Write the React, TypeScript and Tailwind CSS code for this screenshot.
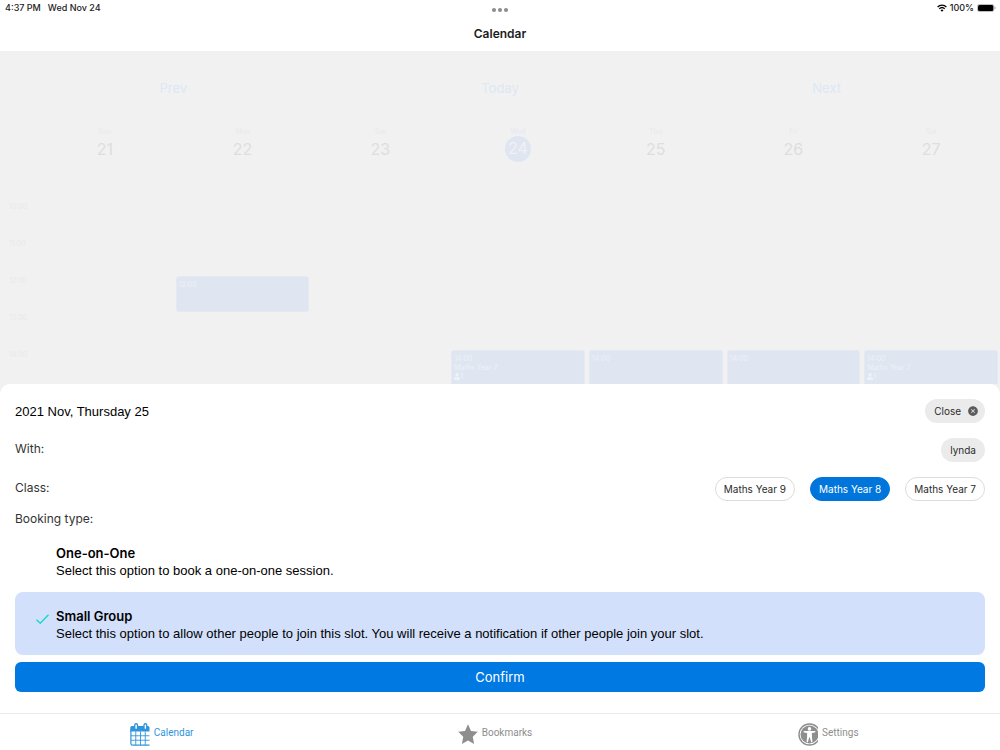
import { useState } from 'react';
import { IoCloseCircle } from 'react-icons/io5';

interface Booking {
  day: number;
  hour: number;
  title?: string;
  people?: number;
}

const days = [
  { name: 'Sun', date: 21 },
  { name: 'Mon', date: 22 },
  { name: 'Tue', date: 23 },
  { name: 'Wed', date: 24 },
  { name: 'Thu', date: 25 },
  { name: 'Fri', date: 26 },
  { name: 'Sat', date: 27 },
];

const today = 24;
const hours = [10, 11, 12, 13, 14];

const bookings: Booking[] = [
  { day: 22, hour: 12 },
  { day: 24, hour: 14, title: 'Maths Year 7', people: 1 },
  { day: 25, hour: 14 },
  { day: 26, hour: 14 },
  { day: 27, hour: 14, title: 'Maths Year 7', people: 1 },
];

const classes = ['Maths Year 9', 'Maths Year 8', 'Maths Year 7'];

const bookingTypes = [
  {
    id: 'single',
    title: 'One-on-One',
    text: 'Select this option to book a one-on-one session.',
  },
  {
    id: 'group',
    title: 'Small Group',
    text: 'Select this option to allow other people to join this slot. You will receive a notification if other people join your slot.',
  },
];

function WifiIcon() {
  return (
    <svg viewBox="0 0 20 15" className="h-2 w-[10px]" fill="none" stroke="#000" strokeWidth="2.6">
      <path d="M1.2 5.4a12.6 12.6 0 0 1 17.6 0" />
      <path d="M4.6 9a7.8 7.8 0 0 1 10.8 0" />
      <path d="M10 15 7 11.8a4.3 4.3 0 0 1 6 0Z" fill="#000" stroke="none" />
    </svg>
  );
}

function BatteryIcon() {
  return (
    <svg viewBox="0 0 38 16" className="h-2 w-[19px]">
      <rect x="0.8" y="0.8" width="33" height="14.4" rx="4.4" fill="#fff" stroke="#9d9d9d" strokeWidth="1.5" />
      <rect x="2" y="2" width="30.6" height="12" rx="3" fill="#000" />
      <path d="M35.4 5.4c1.4.5 2 1.5 2 2.6s-.6 2.1-2 2.6Z" fill="#9d9d9d" />
    </svg>
  );
}

function PersonIcon() {
  return (
    <svg viewBox="0 0 12 14" className="h-[7px] w-[6px]" fill="currentColor">
      <path d="M6 0a3.4 3.4 0 0 1 3.4 3.6C9.4 5.8 7.9 7.4 6 7.4S2.6 5.8 2.6 3.6A3.4 3.4 0 0 1 6 0ZM0 13v-2.4C0 8.8 1.6 7.8 3.2 7.6c1.7 1.4 3.9 1.4 5.6 0 1.6.2 3.2 1.2 3.2 3V13c0 .6-.4 1-1 1H1c-.6 0-1-.4-1-1Z" />
    </svg>
  );
}

function CalendarIcon() {
  return (
    <svg viewBox="0 0 40 46" className="h-[23px] w-5" fill="none">
      <path d="M39 44.3H5a3.2 3.2 0 0 1-3.2-3.2V13" stroke="currentColor" strokeWidth="2.4" />
      <path d="M.6 17V9a3 3 0 0 1 3-3H36a3 3 0 0 1 3 3v8Z" fill="currentColor" />
      <path d="M2 25.5h37M2 34.5h37M11.5 17v27M21 17v27M30.5 17v27" stroke="currentColor" strokeWidth="1.8" />
      <rect x="9.5" y="1.5" width="5.5" height="11.5" rx="2.7" fill="#fff" stroke="currentColor" strokeWidth="2.6" />
      <rect x="28" y="1.5" width="5.5" height="11.5" rx="2.7" fill="#fff" stroke="currentColor" strokeWidth="2.6" />
    </svg>
  );
}

function StarIcon() {
  return (
    <svg viewBox="0 0 40 42" className="h-[21px] w-5" fill="currentColor">
      <path d="M20 .5 26 14 39.5 15.5 29.5 25.3 32.2 40 20 33 7.8 40 10.5 25.3.5 15.5 14 14Z" />
    </svg>
  );
}

// The outer ring runs past the right edge of the icon box and is clipped there
function AccessibilityIcon() {
  return (
    <svg viewBox="0 0 40 46" className="h-[23px] w-5">
      <circle cx="23" cy="23" r="21" fill="none" stroke="currentColor" strokeWidth="2.8" />
      <circle cx="23" cy="23" r="18" fill="currentColor" />
      <circle cx="23" cy="11.8" r="3.6" fill="#fff" />
      <path
        d="M12.5 16.2h21c1.9 0 1.9 2.7 0 3l-5.7 1v7.4l1 9.6c.1 2-2.5 2.3-2.9.4L23.8 29h-1.6l-2.1 8.6c-.4 1.9-3 1.6-2.9-.4l1-9.6v-7.4l-5.7-1c-1.9-.3-1.9-3 0-3Z"
        fill="#fff"
      />
    </svg>
  );
}

function StatusBar() {
  return (
    <div className="grid h-4 grid-cols-3 items-center pl-[5px] pr-1 text-[9px] font-medium text-[#1c1c1c]">
      <div className="flex gap-[7px]">
        <span>4:37 PM</span>
        <span>Wed Nov 24</span>
      </div>
      <div className="flex justify-center gap-[2px] pt-1">
        <span className="size-1 rounded-full bg-[#8c8c8c]" />
        <span className="size-1 rounded-full bg-[#8c8c8c]" />
        <span className="size-1 rounded-full bg-[#8c8c8c]" />
      </div>
      <div className="flex items-center justify-end gap-[3px]">
        <WifiIcon />
        <span>100%</span>
        <BatteryIcon />
      </div>
    </div>
  );
}

function BookingBlock({ booking }: { booking: Booking }) {
  return (
    <div className="mx-[2px] h-full rounded-[3px] border border-[#e4e9f2] bg-[#dfe6f2] px-[2px] pt-[3px] text-[7px] leading-[9px] text-[#eef1f6]">
      <div>{booking.hour}:00</div>
      {booking.title && <div>{booking.title}</div>}
      {booking.people && (
        <div className="flex items-center">
          <PersonIcon />
          {booking.people}
        </div>
      )}
    </div>
  );
}

function WeekView() {
  return (
    <section className="min-h-0 flex-1 overflow-hidden">
      <div className="grid grid-cols-3 px-[10px] pt-7 text-[13px] leading-[18px] text-[#dce8f5]">
        <button type="button">Prev</button>
        <button type="button">Today</button>
        <button type="button">Next</button>
      </div>

      <div className="mt-[30px] grid h-[75px] grid-cols-7 pl-9 text-center">
        {days.map((day) => (
          <div key={day.date} className="flex flex-col items-center">
            <span className={`text-[7px] leading-[9px] ${day.date === today ? 'text-[#e1e8f3]' : 'text-[#e9e9e9]'}`}>
              {day.name}
            </span>
            <span
              className={`flex size-[26px] justify-center rounded-full text-base ${
                day.date === today ? 'bg-[#dfe6f2] leading-6 text-[#f1f1f1]' : 'leading-[26px] text-[#dedede]'
              }`}
            >
              {day.date}
            </span>
          </div>
        ))}
      </div>

      <div className="grid gap-px">
        {hours.map((hour) => (
          <div key={hour} className="flex h-9">
            <div className="w-9 pl-[9px] text-[7px] leading-[9px] text-[#e9e9e9]">{hour}:00</div>
            <div className="grid flex-1 grid-cols-7">
              {days.map((day) => {
                const booking = bookings.find((b) => b.day === day.date && b.hour === hour);
                return <div key={day.date}>{booking && <BookingBlock booking={booking} />}</div>;
              })}
            </div>
          </div>
        ))}
      </div>
    </section>
  );
}

function BookingSheet() {
  const [selectedClass, setSelectedClass] = useState('Maths Year 8');
  const [type, setType] = useState('group');

  return (
    <section className="rounded-t-[10px] bg-white px-[15px] pb-[21px] pt-[15px]">
      <div className="flex h-6 justify-between">
        <h2 className="font-['Liberation_Sans',sans-serif] text-[13px] leading-[26px] text-black">
          2021 Nov, Thursday 25
        </h2>
        <button
          type="button"
          className="flex h-6 items-center gap-[6px] rounded-full bg-[#ebebeb] pl-[9px] pr-[6px] text-[10px] text-[#2b2b2b]"
        >
          Close
          <IoCloseCircle className="size-3 text-[#5c5c5c]" />
        </button>
      </div>

      <div className="mt-[15px] flex justify-between">
        <span className="text-xs leading-[22px] text-[#333]">With:</span>
        <span className="flex h-6 items-center rounded-full bg-[#ebebeb] px-[9px] text-[10px] text-[#2b2b2b]">lynda</span>
      </div>

      <div className="mt-[15px] flex justify-between">
        <span className="text-xs leading-[22px] text-[#333]">Class:</span>
        <div className="flex gap-[15px]">
          {classes.map((name) => (
            <button
              key={name}
              type="button"
              aria-pressed={name === selectedClass}
              onClick={() => setSelectedClass(name)}
              className={`h-6 rounded-full border px-2 text-[10px] ${
                name === selectedClass
                  ? 'border-[#0076dc] bg-[#0076dc] text-white'
                  : 'border-[#dcdcdc] bg-white text-[#2b2b2b]'
              }`}
            >
              {name}
            </button>
          ))}
        </div>
      </div>

      <fieldset className="mt-2">
        <legend className="text-xs leading-5 text-[#333]">Booking type:</legend>
        {bookingTypes.map((option) => (
          <label
            key={option.id}
            className={`relative flex rounded-lg pb-3 pl-[21px] pr-4 pt-4 text-[13px] text-black ${
              option.id === type ? 'bg-[#d2e0fc]' : ''
            }`}
          >
            <input
              type="radio"
              name="booking-type"
              className="sr-only"
              checked={option.id === type}
              onChange={() => setType(option.id)}
            />
            <span className="w-5 pt-[6px]">
              {option.id === type && (
                <svg viewBox="0 0 26 20" className="h-[10px] w-[13px]" fill="none" stroke="#12d8c8" strokeWidth="2.6">
                  <path d="M1 11.5 8.5 18.5 25 1.5" />
                </svg>
              )}
            </span>
            <span className="flex-1">
              <span className="block font-semibold leading-[17px]">{option.title}</span>
              <span className="block font-['Liberation_Sans',sans-serif] leading-[18px]">{option.text}</span>
            </span>
          </label>
        ))}
      </fieldset>

      <button
        type="button"
        className="mt-[7px] block h-[30px] w-full rounded-md bg-[#0079e3] text-[13px] leading-[30px] text-white"
      >
        Confirm
      </button>
    </section>
  );
}

function TabBar() {
  return (
    <nav className="grid h-[37px] grid-cols-3 border-t border-[#ececec] bg-white font-['Roboto',sans-serif] text-[10px] text-[#8e8e8e]">
      <a href="#calendar" className="flex items-center justify-center gap-1 pr-[10px] pt-1 text-[#2f95dc]">
        <CalendarIcon />
        <span className="pb-1">Calendar</span>
      </a>
      <a href="#bookmarks" className="flex items-center justify-center gap-1 pr-[10px] pt-1">
        <StarIcon />
        <span className="pb-1">Bookmarks</span>
      </a>
      <a href="#settings" className="flex items-center justify-center gap-1 pr-[10px] pt-1">
        <AccessibilityIcon />
        <span className="pb-1">Settings</span>
      </a>
    </nav>
  );
}

export default function App() {
  return (
    <div className="flex h-screen flex-col bg-[#f1f1f1] font-['Inter',sans-serif]">
      <header className="bg-white">
        <StatusBar />
        <h1 className="h-[35px] text-center text-xs font-semibold leading-[35px] text-[#1c1c1e]">Calendar</h1>
      </header>
      <WeekView />
      <BookingSheet />
      <TabBar />
    </div>
  );
}
